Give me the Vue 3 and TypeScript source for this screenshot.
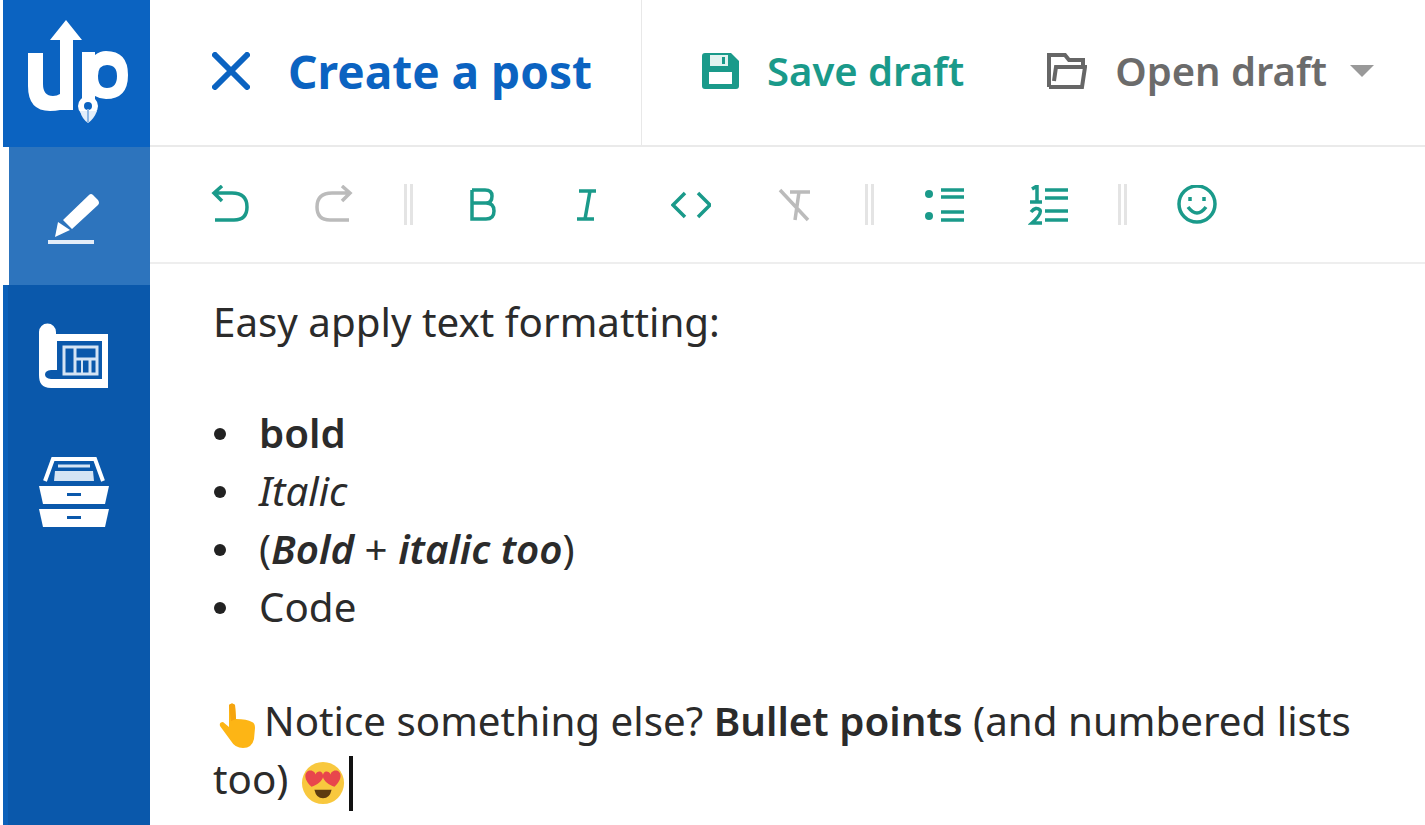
<template>
  <div class="app">
    <!-- Barra lateral -->
    <aside class="sidebar">
      <div class="logo">
        <svg width="112" height="112" viewBox="0 0 112 112">
          <path d="M46 4 L62 24 H53 V94 H40 Q36 95 30 95 Q8 95 8 70 V37 H23 V68 Q23 80 33 80 Q37 80 40 78 V24 H30 Z" fill="#fff" />
          <path fill-rule="evenodd" d="M62 36 H75 V39 Q80 35 86 35 Q108 35 108 59 Q108 83 86 83 Q80 83 75 80 V92 H62 Z M87 49 Q78 49 78 60 Q78 72 87 72 Q97 72 97 60 Q97 49 87 49 Z" fill="#fff" />
          <circle cx="68" cy="90" r="10" fill="#fff" />
          <path d="M60 95 Q62 103 68 107 Q74 103 77 95 Z" fill="#e3eefa" />
          <circle cx="68" cy="90" r="4" fill="#0b63c1" />
          <rect x="67" y="93" width="2" height="13" fill="#8db7e4" />
        </svg>
      </div>
      <div class="nav-active">
        <svg width="56" height="56" viewBox="0 0 56 56">
          <path d="M15 28 L41 3 Q43 1 45 3 L50 8 Q52 11 50 13 L24 37 Z" fill="#fff" />
          <path d="M7 45 L10 30 L22 38 Z" fill="#fff" />
          <rect x="0" y="48" width="46" height="4" fill="#e4edf8" />
        </svg>
      </div>
      <div class="nav-rest">
        <svg width="72" height="66" viewBox="0 0 72 66" fill="none">
          <path d="M1 9 a8.500 8.500 0 0 1 17 0 V11 H70 V65 H13 C4 65 1 60 1 52 Z" fill="#fff" />
          <path d="M19 18 H64 V56 H13 C5 56 5 47 13 47 H19 Z" fill="#0a58ab" />
          <rect x="26" y="24" width="33" height="27" stroke="#d5e4f4" stroke-width="3" />
          <path d="M37 25 V50 M37 36 H58 M52 36 V50" stroke="#d5e4f4" stroke-width="3" />
          <path d="M44 36 V50" stroke="#d5e4f4" stroke-width="2" />
        </svg>
        <svg width="72" height="72" viewBox="0 0 72 72" fill="none">
          <path d="M7 24 L15 2 H57 L65 24" stroke="#fff" stroke-width="4" />
          <path d="M20 9 H52" stroke="#d5e4f4" stroke-width="3" />
          <path d="M17 14 H55 L56 24 H16 Z" fill="#d5e4f4" />
          <path d="M1 29 H71 L67 47 H5 Z" fill="#fff" />
          <path d="M1 52 H71 L67 70 H5 Z" fill="#fff" />
          <rect x="29" y="36" width="14" height="3" fill="#0a58ab" />
          <rect x="29" y="59" width="14" height="3" fill="#0a58ab" />
        </svg>
      </div>
    </aside>

    <main class="main">
      <!-- Cabeçalho -->
      <header class="topbar">
        <div class="title-box">
          <svg width="38" height="38" viewBox="0 0 38 38">
            <path d="M3 3 L35 35 M35 3 L3 35" stroke="#0b63c1" stroke-width="6" stroke-linecap="round" />
          </svg>
          <h1 class="title">Create a post</h1>
        </div>
        <div class="actions">
          <button class="action save">
            <svg width="37" height="36" viewBox="0 0 37 36">
              <path fill-rule="evenodd" d="M0 3 Q0 0 3 0 H29 L37 8 V33 Q37 36 34 36 H3 Q0 36 0 33 Z M7 19 V31 H30 V19 Z M8 2 V13 H26 V2 Z" fill="#1a9a8a" />
              <rect x="8" y="2" width="18" height="11" fill="#e2f3f0" />
              <rect x="20" y="4" width="3" height="7" fill="#1a9a8a" />
            </svg>
            <span>Save draft</span>
          </button>
          <button class="action open">
            <svg width="40" height="36" viewBox="0 0 40 36" fill="none">
              <path d="M2 34 V2 H18 L22 7 H36 V14 M2 34 H35 L38 14 H9 L7 28" stroke="#666" stroke-width="4" />
            </svg>
            <span>Open draft</span>
            <i class="caret"></i>
          </button>
        </div>
      </header>

      <!-- Barra de formatação -->
      <div class="toolbar">
        <template v-for="(group, g) in toolGroups" :key="g">
          <i v-if="g > 0" class="sep"></i>
          <div class="tool-group">
            <span v-for="tool in group" :key="tool.name" class="tool" :class="{ off: tool.off }">
              <svg width="40" height="40" viewBox="0 0 40 40" fill="none" stroke="currentColor" stroke-width="3.500">
                <path :d="tool.d" />
                <circle v-for="c in tool.dots || []" :key="c" cx="5" :cy="c" r="4" fill="currentColor" stroke="none" />
              </svg>
            </span>
          </div>
        </template>
      </div>

      <!-- Conteúdo -->
      <section class="editor">
        <p>Easy apply text formatting:</p>
        <p class="gap-a"></p>
        <ul>
          <li><b>bold</b></li>
          <li><em>Italic</em></li>
          <li>(<b><em>Bold</em></b> + <b><em>italic too</em></b>)</li>
          <li>Code</li>
        </ul>
        <p class="gap-b"></p>
        <p>
          <svg class="emoji hand" width="36" height="45" viewBox="0 0 36 45">
            <path d="M10 2 Q13 -1 16 2 L17 16 Q28 16 33 19 Q36 20 36 25 L35 36 Q33 45 24 45 Q16 45 12 38 L1 23 Q0 19 4 19 L10 24 Z" fill="#fdb515" />
            <path d="M10 2 Q13 -1 16 2 L17 16 L12 18 Z" fill="#f5a40f" />
          </svg>Notice something else? <b>Bullet points</b> (and numbered lists too)
          <svg class="emoji love" width="44" height="44" viewBox="0 0 46 46">
            <circle cx="23" cy="23" r="22" fill="#f8c83e" />
            <path d="M11 27 C1 18 4 9 11 10 C13 11 15 12 15 14 C17 9 24 10 23 17 C22 21 17 25 11 27 Z" fill="#e8464c" />
            <path d="M35 27 C45 18 42 9 35 10 C33 11 31 12 31 14 C29 9 22 10 23 17 C24 21 29 25 35 27 Z" fill="#e8464c" />
            <path d="M14 30 H32 Q30 39 23 39 Q16 39 14 30 Z" fill="#5d3b10" />
          </svg><i class="cursor"></i>
        </p>
      </section>
    </main>
  </div>
</template>

<script setup lang="ts">
interface Tool {
  name: string
  d: string
  off?: boolean
  dots?: number[]
}

// Ícones da barra de formatação
const toolGroups: Tool[][] = [
  [
    { name: 'undo', d: 'M12 1 L4 8 L12 16 M4 8 H22 Q37 8 37 22 Q37 35 24 35 H5' },
    { name: 'redo', off: true, d: 'M28 1 L36 8 L28 16 M36 8 H18 Q3 8 3 22 Q3 35 16 35 H35' }
  ],
  [
    { name: 'bold', d: 'M9 5 V34 H23 Q31 34 31 26 Q31 18 23 18 H9 M23 18 Q29 18 29 11 Q29 5 22 5 H9' },
    { name: 'italic', d: 'M12 6 H29 M10 34 H27 M23 6 L18 34' },
    { name: 'code', d: 'M14 8 L2 20 L14 32 M27 8 L39 20 L27 32' },
    { name: 'clear', off: true, d: 'M5 5 L33 35 M15 7 H35 M24 7 L20 35' }
  ],
  [
    { name: 'bullets', dots: [9, 31], d: 'M17 5 H40 M17 12 H40 M17 27 H40 M17 35 H40' },
    { name: 'numbers', d: 'M4 4 L9 1 V16 M2 17 H14 M3 27 Q8 21 12 25 Q14 29 4 38 H14 M17 5 H40 M17 13 H40 M17 26 H40 M17 35 H40' }
  ],
  [
    { name: 'emoji', d: 'M20 1 A18 18 0 1 0 20 37 A18 18 0 1 0 20 1 M11 22 Q20 34 29 22 M13 12 V16 M27 12 V16' }
  ]
]
</script>

<style>
html, body {
  margin: 0;
  background: #fff;
}
</style>

<style scoped>
.app {
  display: flex;
  width: 1425px;
  height: 825px;
  overflow: hidden;
  background: #fff;
  color: #2b2b2b;
  font-family: "Noto Sans", "Open Sans", sans-serif;
}

.sidebar {
  flex: none;
  width: 147px;
  margin-left: 3px;
  display: flex;
  flex-direction: column;
}

.logo {
  flex: none;
  height: 147px;
  background: #0b63c1;
  box-sizing: border-box;
  padding: 16px 0 0 17px;
}

.nav-active {
  flex: none;
  height: 138px;
  margin-left: 6px;
  background: #2d74bd;
  box-sizing: border-box;
  padding: 45px 0 0 39px;
}

.nav-rest {
  flex: 1;
  display: flex;
  flex-direction: column;
  gap: 68px;
  background: #0a58ab;
  border-left: 5px solid #0b60b9;
  padding: 38px 0 0 30px;
}

.main {
  flex: 1;
  min-width: 0;
  display: flex;
  flex-direction: column;
}

.topbar {
  flex: none;
  height: 147px;
  box-sizing: border-box;
  border-bottom: 2px solid #eaeaea;
  display: flex;
}

.title-box {
  width: 492px;
  box-sizing: border-box;
  border-right: 1px solid #e8e8e8;
  display: flex;
  align-items: center;
  gap: 38px;
  padding: 0 0 4px 62px;
}

.title {
  margin: 0;
  font-size: 46px;
  font-weight: 700;
  color: #0b63c1;
  white-space: nowrap;
}

.actions {
  display: flex;
  align-items: center;
  padding: 0 0 4px 60px;
  gap: 83px;
}

.action {
  display: flex;
  align-items: center;
  gap: 28px;
  padding: 0;
  border: 0;
  background: none;
  font: 600 40px "Noto Sans", "Open Sans", sans-serif;
  white-space: nowrap;
}

.action.save {
  color: #1a9a8a;
}

.action.open {
  color: #6b6b6b;
}

.caret {
  width: 0;
  height: 0;
  margin-left: -5px;
  border-left: 12px solid transparent;
  border-right: 12px solid transparent;
  border-top: 12px solid #999;
}

.toolbar {
  flex: none;
  height: 117px;
  box-sizing: border-box;
  border-bottom: 2px solid #eee;
  display: flex;
  align-items: center;
  padding: 0 0 0 60px;
  gap: 50px;
}

.tool-group {
  display: flex;
  gap: 64px;
}

.tool {
  color: #1a9a8a;
  display: flex;
}

.tool.off {
  color: #bbb;
}

.sep {
  width: 3px;
  height: 41px;
  border-left: 3px solid #e4e4e4;
  border-right: 3px solid #e4e4e4;
}

.editor {
  padding: 29px 60px 0 63px;
  font-size: 40.3px;
  line-height: 58px;
  color: #2b2b2b;
}

.editor b {
  font-weight: 600;
}

.editor p {
  margin: 0;
}

.gap-a {
  height: 53px;
}

.gap-b {
  height: 56px;
}

.editor ul {
  margin: 0;
  padding: 0 0 0 46px;
  list-style: none;
}

.editor li::before {
  content: "";
  display: inline-block;
  width: 12px;
  height: 12px;
  margin: 0 33px 0 -45px;
  border-radius: 50%;
  background: #222;
  vertical-align: 0.2em;
}

.emoji {
  display: inline-block;
}

.hand {
  margin: 0 9px 0 6px;
  vertical-align: -12px;
}

.love {
  margin-left: 2px;
  vertical-align: -11px;
}

.cursor {
  display: inline-block;
  width: 4px;
  height: 55px;
  margin-left: 4px;
  background: #111;
  vertical-align: -17px;
}
</style>
